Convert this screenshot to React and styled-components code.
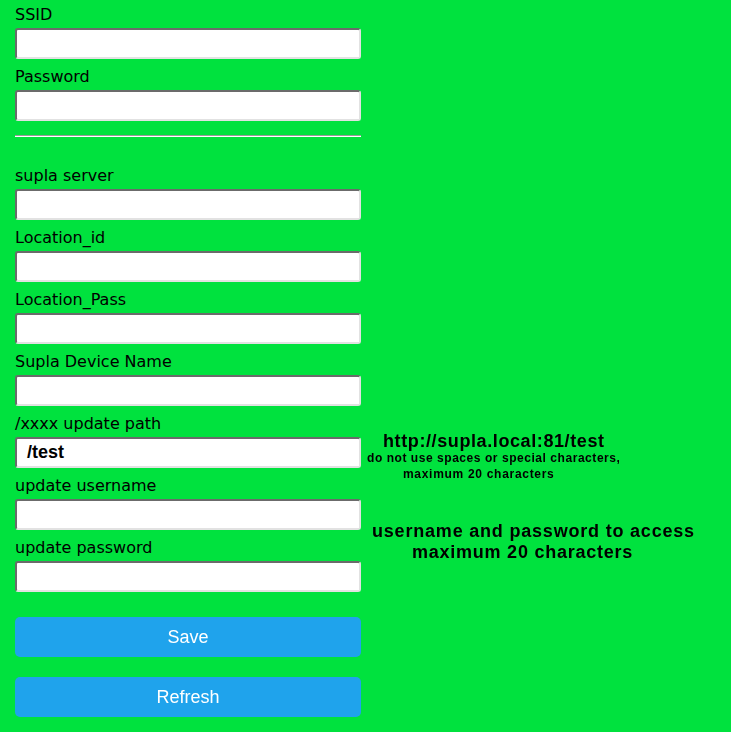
import React from "react";
import styled, { createGlobalStyle } from "styled-components";

const GlobalStyle = createGlobalStyle`
  html, body {
    margin: 0;
    padding: 0;
    background: #00e23e;
  }
  body {
    font-family: "DejaVu Sans", Verdana, sans-serif;
    color: #000;
  }
`;

const Page = styled.div`
  display: grid;
  grid-template-columns: 346px 1fr;
  padding-left: 15px;
  min-height: 732px;
  box-sizing: border-box;
`;

const Form = styled.form`
  display: flex;
  flex-direction: column;
`;

const Field = styled.div`
  display: flex;
  flex-direction: column;
  padding-top: 9px;
  &:first-child {
    padding-top: 6px;
  }
`;

const Label = styled.label`
  font-size: 16px;
  line-height: 18px;
  margin-bottom: 4px;
`;

const Input = styled.input`
  box-sizing: border-box;
  width: 346px;
  height: 31px;
  margin: 0;
  padding: 0 5px;
  background: #fff;
  border-style: solid;
  border-width: 2px;
  border-color: #6b6b6b #e2e2e2 #e2e2e2 #6b6b6b;
  border-radius: 3px;
  font-family: "Liberation Sans", Arial, sans-serif;
  font-size: 18px;
  font-weight: bold;
  color: #000;
  outline: none;
`;

const Divider = styled.hr`
  width: 346px;
  height: 0;
  margin: 14px 0 21px;
  border: none;
  border-top: 1px solid #9a9a9a;
  border-bottom: 1px solid #ffffff;
`;

const Button = styled.button`
  width: 346px;
  height: 40px;
  margin-top: ${(p) => p.$gap}px;
  border: none;
  border-radius: 5px;
  background: #1fa3ec;
  color: #fff;
  font-family: "Liberation Sans", Arial, sans-serif;
  font-size: 18px;
  cursor: pointer;
`;

const Aside = styled.div`
  display: flex;
  flex-direction: column;
  padding-top: 431px;
  font-family: "Liberation Sans", Arial, sans-serif;
  font-weight: bold;
`;

const Note = styled.div`
  display: flex;
  flex-direction: column;
  margin-top: ${(p) => p.$gap || 0}px;
`;

const NoteLine = styled.div`
  font-size: ${(p) => (p.$small ? 12 : 18)}px;
  line-height: ${(p) => p.$lh}px;
  letter-spacing: ${(p) => p.$track}px;
  padding-left: ${(p) => p.$indent}px;
  white-space: nowrap;
`;

const fields = [
  { label: "supla server" },
  { label: "Location_id" },
  { label: "Location_Pass" },
  { label: "Supla Device Name" },
  { label: "/xxxx update path", value: " /test" },
  { label: "update username" },
  { label: "update password" },
];

export default function App() {
  return (
    <>
      <GlobalStyle />
      <Page>
        <Form onSubmit={(e) => e.preventDefault()}>
          <Field>
            <Label>SSID</Label>
            <Input autoFocus />
          </Field>
          <Field>
            <Label>Password</Label>
            <Input type="password" />
          </Field>
          <Divider />
          {fields.map((f) => (
            <Field key={f.label}>
              <Label>{f.label}</Label>
              <Input defaultValue={f.value || ""} />
            </Field>
          ))}
          <Button type="submit" $gap={25}>
            Save
          </Button>
          <Button type="button" $gap={20}>
            Refresh
          </Button>
        </Form>
        <Aside>
          <Note>
            <NoteLine $lh={20} $indent={22} $track={0.6}>
              http://supla.local:81/test
            </NoteLine>
            <NoteLine $small $lh={15.5} $indent={6} $track={0.55}>
              do not use spaces or special characters,
            </NoteLine>
            <NoteLine $small $lh={15.5} $indent={42} $track={0.7}>
              maximum 20 characters
            </NoteLine>
          </Note>
          <Note $gap={38.5}>
            <NoteLine $lh={21} $indent={11} $track={0.8}>
              username and password to access
            </NoteLine>
            <NoteLine $lh={21} $indent={51} $track={0.76}>
              maximum 20 characters
            </NoteLine>
          </Note>
        </Aside>
      </Page>
    </>
  );
}
